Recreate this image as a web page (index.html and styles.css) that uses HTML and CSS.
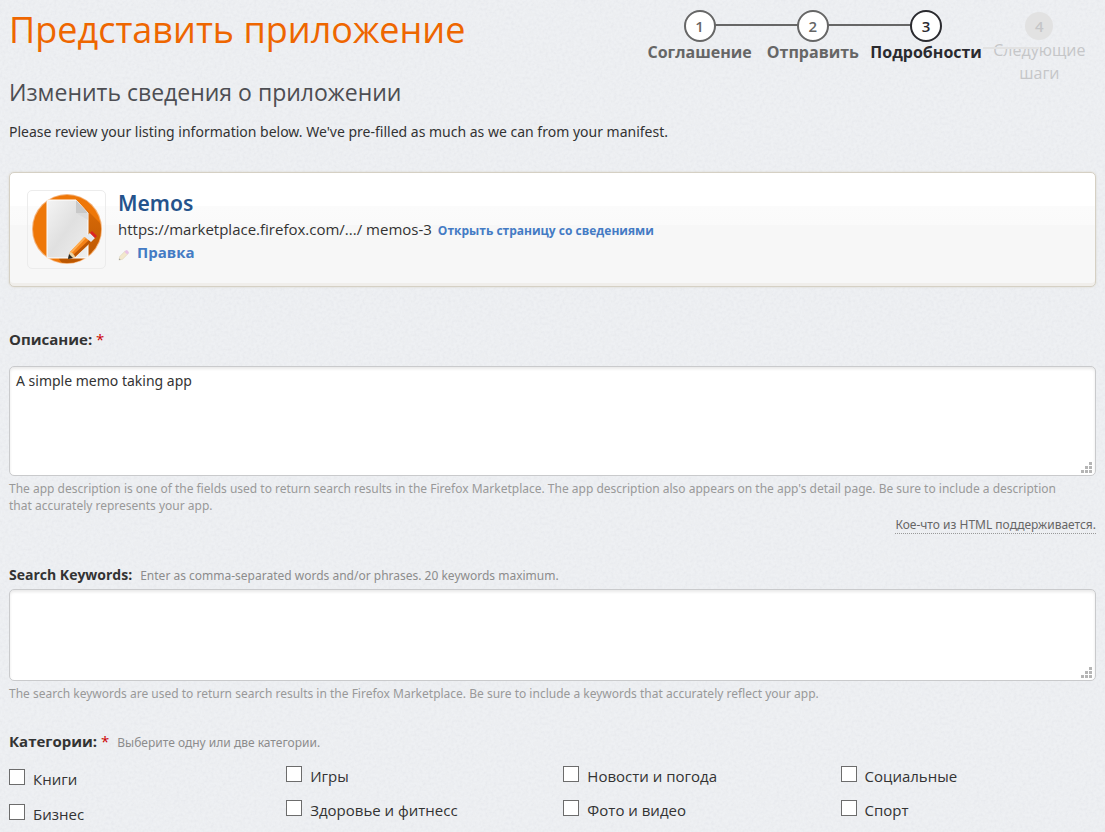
FILE: index.html
```html
<!DOCTYPE html>
<html lang="ru">
<head>
<meta charset="utf-8">
<meta name="viewport" content="width=device-width, initial-scale=1">
<title>Представить приложение</title>
<link rel="stylesheet" href="styles.css">
</head>
<body>
<header class="masthead">
  <div class="intro">
    <h1>Представить приложение</h1>
    <h2>Изменить сведения о приложении</h2>
    <p class="latin">Please review your listing information below. We've pre-filled as much as we can from your manifest.</p>
  </div>
  <ol class="steps">
    <li class="step done"><span class="num">1</span><span class="name">Соглашение</span></li>
    <li class="step done"><span class="num">2</span><span class="name">Отправить</span></li>
    <li class="step current" aria-current="step"><span class="num">3</span><span class="name">Подробности</span></li>
    <li class="step next"><span class="num">4</span><span class="name">Следующие шаги</span></li>
  </ol>
</header>
<main>
  <section class="card">
    <div class="app-icon">
      <svg viewBox="0 0 77 77" role="img" aria-label="Memos">
        <defs>
          <linearGradient id="page" x1="0" y1="0" x2="1" y2="1"><stop offset="0" stop-color="#f4f4f4"/><stop offset=".5" stop-color="#e0e0e0"/><stop offset="1" stop-color="#efefef"/></linearGradient>
          <linearGradient id="shade" x1="0" y1="0" x2="0" y2="1"><stop offset="0" stop-color="#d96a07"/><stop offset="1" stop-color="#b55300"/></linearGradient>
          <clipPath id="disc"><circle cx="39" cy="38" r="34"/></clipPath>
        </defs>
        <circle cx="39" cy="38" r="35" fill="#f3b27a"/>
        <circle cx="39" cy="38" r="34" fill="#ee7708"/>
        <path clip-path="url(#disc)" d="M57 17 80 40 80 80 40 80 31 68z" fill="url(#shade)"/>
        <path d="M21 9H48L60 22V65Q60 67 58 67H21Q19 67 19 65V11Q19 9 21 9Z" fill="url(#page)" stroke="#fff" stroke-width="1"/>
        <path d="M48 9V22H60Z" fill="#c9c9c9"/>
        <path d="M48 22H60V29Z" fill="#d5d5d5" opacity=".6"/>
        <path d="M40 68 42 61 57 46 63 51 47 66Z" fill="#f48218"/>
        <path d="M45 64 61 49 63 51 47 66Z" fill="#bd5604"/>
        <path d="M42 61 56 46 58 47 43 63Z" fill="#ffad51"/>
        <path d="M40 68 42 61Q46 62 47 66Z" fill="#ead2a5"/>
        <path d="M40 68 41 63 45 67Z" fill="#292929"/>
        <path d="M57 46 62 42 67 47 63 51Z" fill="#e3e9ef"/>
        <path d="M62 42 64 40 69 45 67 47Z" fill="#dc2424"/>
      </svg>
    </div>
    <div class="app-info">
      <h3>Memos</h3>
      <p class="address"><span>https://marketplace.firefox.com/.../ memos-3</span> <a class="view" href="#">Открыть страницу со сведениями</a></p>
      <p><a class="edit" href="#"><svg viewBox="0 0 13 13" aria-hidden="true"><path d="M1 12 2 8 8 2 11 5 5 11Z" fill="#f3e8cc" stroke="#e0d6be" stroke-width=".7"/><path d="M7 3 9 1Q11 1 12 4L10 6Z" fill="#e9c3e6"/><path d="M1 12 1.4 10.2 3 11.5Z" fill="#999"/></svg>Правка</a></p>
    </div>
  </section>
  <form>
    <div class="field">
      <div class="caption spaced"><label for="description">Описание:</label> <span class="req">*</span></div>
      <div class="box"><textarea id="description" class="tall">A simple memo taking app</textarea><svg class="grip" viewBox="0 0 11 11" aria-hidden="true"><path d="M8 0h3v3H8zM4 4h3v3H4zM8 4h3v3H8zM0 8h3v3H0zM4 8h3v3H4zM8 8h3v3H8z"/></svg></div>
      <p class="note">The app description is one of the fields used to return search results in the Firefox Marketplace. The app description also appears on the app's detail page. Be sure to include a description that accurately represents your app.</p>
      <p class="support"><a href="#">Кое-что из HTML поддерживается.</a></p>
    </div>
    <div class="field">
      <div class="caption"><label class="latin-label" for="keywords">Search Keywords:</label><span class="hint">Enter as comma-separated words and/or phrases. 20 keywords maximum.</span></div>
      <div class="box close"><textarea id="keywords"></textarea><svg class="grip" viewBox="0 0 11 11" aria-hidden="true"><path d="M8 0h3v3H8zM4 4h3v3H4zM8 4h3v3H8zM0 8h3v3H0zM4 8h3v3H4zM8 8h3v3H8z"/></svg></div>
      <p class="note">The search keywords are used to return search results in the Firefox Marketplace. Be sure to include a keywords that accurately reflect your app.</p>
    </div>
    <fieldset>
      <legend class="caption">Категории: <span class="req">*</span><span class="hint">Выберите одну или две категории.</span></legend>
      <div class="categories">
        <div class="column first">
          <label><input type="checkbox">Книги</label>
          <label><input type="checkbox">Бизнес</label>
        </div>
        <div class="column">
          <label><input type="checkbox">Игры</label>
          <label><input type="checkbox">Здоровье и фитнесс</label>
        </div>
        <div class="column">
          <label><input type="checkbox">Новости и погода</label>
          <label><input type="checkbox">Фото и видео</label>
        </div>
        <div class="column">
          <label><input type="checkbox">Социальные</label>
          <label><input type="checkbox">Спорт</label>
        </div>
      </div>
    </fieldset>
  </form>
</main>
</body>
</html>
```
FILE: styles.css
```css
* { box-sizing: border-box; }

body {
  margin: 0;
  padding: 0 9px;
  color: #333;
  font: 15px/22px "Open Sans", "Noto Sans", sans-serif;
  background: #eef0f3 url("data:image/svg+xml,%3Csvg xmlns='http://www.w3.org/2000/svg' width='200' height='200'%3E%3Cfilter id='n'%3E%3CfeTurbulence type='fractalNoise' baseFrequency='.35' numOctaves='2' stitchTiles='stitch'/%3E%3CfeColorMatrix values='0 0 0 0 .45 0 0 0 0 .45 0 0 0 0 .5 .2 0 0 0 -.07'/%3E%3C/filter%3E%3Crect width='200' height='200' filter='url(%23n)'/%3E%3C/svg%3E");
}

h1, h2, h3, p, ol { margin: 0; padding: 0; }
a { color: #447bc4; text-decoration: none; }

.masthead { display: flex; justify-content: space-between; }
.intro { flex: 1; min-width: 0; }
h1 { color: #ee6600; font-size: 36px; line-height: 60px; font-weight: 400; }
h2 { color: #4d4e53; font-size: 23px; line-height: 32px; font-weight: 400; margin-top: 16px; }
.latin { margin-top: 13px; font-family: "Noto Sans", sans-serif; font-size: 14px; white-space: nowrap; }

.steps { display: flex; list-style: none; width: 453px; padding-top: 10px; margin-left: -200px; }
.step { flex: 1; position: relative; display: flex; flex-direction: column; align-items: center; text-align: center; font-size: 16px; line-height: 23px; }
.step .num { position: relative; z-index: 1; width: 32px; height: 32px; border: 2px solid; border-radius: 50%; background: #fff; font-size: 15px; font-weight: 600; line-height: 28px; }
.step .name { font-weight: 700; margin-top: -1px; }
.done { color: #666; }
.current { color: #2a2a2f; }
.step.done::after { content: ""; position: absolute; top: 14px; left: 50%; width: 100%; height: 2px; background: #666; }
.next { color: #c5c6c8; }
.step.next .num { width: 28px; height: 28px; margin-top: 2px; border: 0; background: #e2e2e2; }
.step.next .name { font-weight: 400; }
.step.next::after { content: ""; position: absolute; top: 37px; left: 0; width: 50%; height: 2px; background: #e2e2e2; }

.card {
  display: flex;
  gap: 12px;
  margin-top: 29px;
  padding: 17px;
  border: 1px solid #d5d0c4;
  border-radius: 5px;
  background: linear-gradient(#fff 33px, #fbfbfb 33px, #fafafa 52px, #f7f7f7 52px);
  box-shadow: inset 0 -3px 0 #f0eeeb, 0 0 2px #d5d0c4;
}
.app-icon { width: 79px; height: 79px; border: 1px solid #ececec; border-radius: 5px; }
.app-icon svg { display: block; width: 100%; }
h3 { color: #25538c; font: 600 21px/26px "Noto Sans", sans-serif; }
.address { display: flex; flex-wrap: wrap; align-items: baseline; column-gap: 6px; padding-top: 2px; }
.view { font-size: 12px; font-weight: 700; }
.edit { font-weight: 700; }
.edit svg { width: 12px; height: 12px; margin-right: 7px; vertical-align: -3px; }
.address + p { line-height: 20px; }

.field { margin-bottom: 28px; }
form { margin-top: 41px; }
.caption { font-size: 15px; font-weight: 700; padding: 0; }
.spaced { margin-bottom: 16px; }
.latin-label { font-size: 14px; }
.req { color: #c00; font-weight: 400; }
.hint { margin-left: 8px; color: #8c8c8c; font: 400 12px/22px "Noto Sans", sans-serif; }
.box { position: relative; margin-top: 4px; }
.box.close { margin-top: 2px; }
textarea {
  display: block;
  width: 100%;
  height: 92px;
  padding: 3px 6px;
  resize: none;
  border: 1px solid #c9cacc;
  border-radius: 5px;
  background: #fff;
  box-shadow: inset 0 2px 3px #e9e9e9;
  color: #333;
  font: 14px/22px "Noto Sans", sans-serif;
}
.tall { height: 110px; }
.grip { position: absolute; right: 4px; bottom: 3px; width: 11px; height: 11px; fill: #b5b5b5; }
.note { margin-top: 4px; padding-right: 20px; color: #999; font: 12px/17px "Noto Sans", sans-serif; }
.support { margin: 2px 0 30px; text-align: right; font: 12px/17px "Noto Sans", sans-serif; }
.support a { color: #666; border-bottom: 1px dotted #999; }

fieldset { min-width: 0; margin: 0; padding: 0; border: 0; }
.categories { display: grid; grid-template-columns: repeat(3, 51fr) 47fr; padding-top: 12px; }
.column { display: flex; flex-direction: column; gap: 14px; }
.column.first { padding-top: 3px; gap: 15px; }
.column label { display: flex; gap: 8px; line-height: 20px; }
input { appearance: none; width: 16px; height: 16px; margin: 0; border: 1px solid #6c6c6c; background: #fff; }
input:checked { background: #447bc4; }
```
